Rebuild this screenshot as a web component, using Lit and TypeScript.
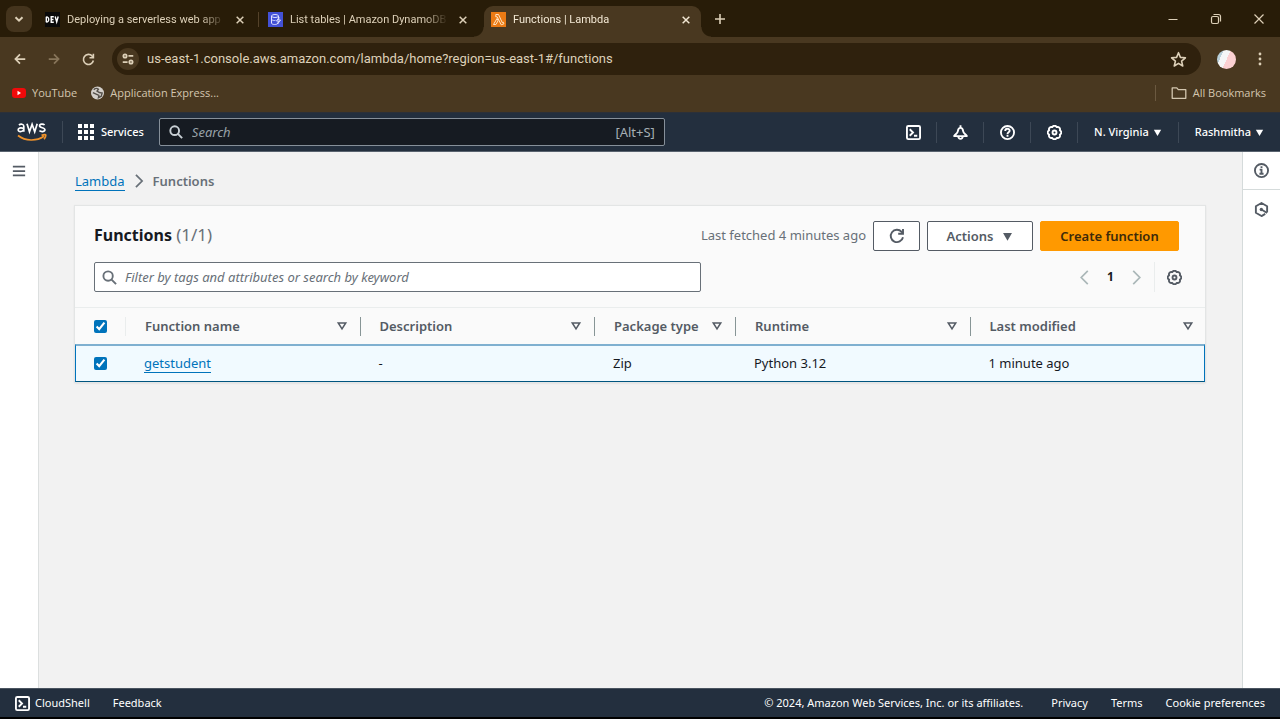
import { LitElement, html, css, svg } from "lit";
import { customElement, property } from "lit/decorators.js";
import { classMap } from "lit/directives/class-map.js";

const base = css`
  * { box-sizing: border-box; }
  button, input { font: inherit; color: inherit; margin: 0; padding: 0; border: 0; background: none; }
  button { display: flex; align-items: center; justify-content: center; }
  a { color: inherit; text-decoration: none; }
  svg { display: block; flex: none; }
  input { outline: none; min-width: 0; }
`;

const icon = (body: unknown, size = 16, width = 2) => html`
  <svg width=${size} height=${size} viewBox="0 0 16 16" fill="none" stroke="currentColor"
    stroke-width=${width} aria-hidden="true">${body}</svg>`;

const shapes = {
  close: svg`<path d="M4.200 4.200l7.600 7.600M11.800 4.200l-7.600 7.600"/>`,
  chevron: svg`<path d="M4.500 6.200L8 9.700l3.500-3.500"/>`,
  plus: svg`<path d="M8 3v10M3 8h10"/>`,
  back: svg`<path d="M14 8H3M8 2.800L2.800 8 8 13.200"/>`,
  forward: svg`<path d="M2 8h11M8 2.800L13.200 8 8 13.200"/>`,
  reload: svg`<path d="M14 9.300A6.200 6.200 0 1 1 12.600 3.800L14 5.200"/><path d="M14 1v4.800H9.200"/>`,
  tune: svg`<path d="M8.500 4.500H14M2 11.500h5.500"/><circle cx="4.600" cy="4.500" r="1.900"/><circle cx="11.400" cy="11.500" r="1.900"/>`,
  star: svg`<path d="M8 1.600l1.800 4.400 4.700.4-3.600 3.100 1.100 4.600L8 11.700l-4 2.400 1.100-4.600L1.500 6.400l4.700-.4z" stroke-linejoin="round"/>`,
  dots: svg`<g fill="currentColor" stroke="none"><circle cx="8" cy="3" r="1.400"/><circle cx="8" cy="8" r="1.400"/><circle cx="8" cy="13" r="1.400"/></g>`,
  folder: svg`<path d="M1.200 13.300V2.900h4.600l1.500 1.800h7.500v8.600z" stroke-linejoin="round"/>`,
  search: svg`<circle cx="6.500" cy="6.500" r="5"/><path d="M10.200 10.200L15 15"/>`,
  shell: svg`<rect x="1" y="1" width="14" height="14" rx="1.500"/><path d="M4 4.500L7.500 8 4 11.500M8.500 11.500H12"/>`,
  bell: svg`<path d="M8 .3v2.500M8 3C5.800 3 5.400 4.800 5.200 6.500 4.900 8.600 2.800 9.700 1.200 11.800h13.600C13.200 9.700 11.100 8.600 10.800 6.500 10.600 4.800 10.200 3 8 3zM5.600 12c.2 3.700 4.600 3.700 4.800 0" stroke-linejoin="round"/>`,
  help: svg`<circle cx="8" cy="8" r="7"/><path d="M5.600 6.300c0-3 4.700-3 4.700-.2 0 1.700-2.300 1.700-2.300 3.400M8 10.500v2"/>`,
  gear: svg`<path d="M13.730 5.630A2.600 2.600 0 0 1 13.730 10.370A2.600 2.600 0 0 1 10.370 13.730A2.600 2.600 0 0 1 5.630 13.730A2.600 2.600 0 0 1 2.270 10.370A2.600 2.600 0 0 1 2.270 5.630A2.600 2.600 0 0 1 5.630 2.270A2.600 2.600 0 0 1 10.370 2.270A2.600 2.600 0 0 1 13.730 5.630z" stroke-linejoin="round"/><circle cx="8" cy="8" r="2.100"/>`,
  info: svg`<circle cx="8" cy="8" r="7"/><path d="M8 3.400v2M6 7h2v4.500M5.800 11.500h4.400"/>`,
  hex: svg`<path d="M14 11V4.500L8 1 2 4.500v7L8 15l4-2.300" stroke-linejoin="round"/><circle cx="7.800" cy="8" r="1.800" fill="currentColor" stroke="none"/><path d="M8 8l6 3.800"/>`,
  menu: svg`<path d="M1 3h14M1 8h14M1 13h14"/>`,
  right: svg`<path d="M4.500 1l7 7-7 7"/>`,
  left: svg`<path d="M11.500 1l-7 7 7 7"/>`,
  caret: svg`<path d="M1.500 3h13L8 14z" fill="currentColor" stroke="none"/>`,
  sort: svg`<path d="M3 4h10L8 11.800z"/>`,
  grid: svg`<g fill="currentColor" stroke="none">${[0, 6, 12].map((x) => [0, 6, 12].map((y) => svg`<rect x=${x} y=${y} width="4" height="4"/>`))}</g>`,
};

const favicons = {
  dev: html`<svg width="15" height="15" viewBox="0 0 15 15" fill="none" stroke="#fff" stroke-width="1.400">
    <rect width="15" height="15" fill="#0a0a0a" stroke="none"/>
    <path d="M1.300 4.800v5.400M1.300 4.900c3.200-.4 3.200 5.600 0 5.200M8.800 4.800H6.200v5.400h2.600M6.200 7.500h2.300M10.200 4.500l1.500 5.400 1.500-5.400"/></svg>`,
  dynamo: html`<svg width="15" height="15" viewBox="0 0 15 15" fill="none" stroke="#dfe1ff" stroke-width="1">
    <rect width="15" height="15" fill="#4351d6" stroke="none"/>
    <ellipse cx="7" cy="4" rx="3.500" ry="1.500"/><path d="M3.500 4v7c0 2 6 2 6.500 0M10.500 4v2M3.500 7.500c1 1 3 1.200 4 .8M11 5.500L8.500 9h2L9.500 12l3-4h-2z"/></svg>`,
  lambda: html`<svg width="15" height="15" viewBox="0 0 15 15" fill="none" stroke="#ffe3c2" stroke-width="1">
    <rect width="15" height="15" fill="#ea7a14" stroke="none"/>
    <path d="M4.800 2.500h2.700l3.700 8 1-.4.700 1.700-2.700 1-4-8H4.800zM6 6.500l-3.500 6h2.400l2.200-3.800z"/></svg>`,
};

@customElement("browser-chrome")
class BrowserChrome extends LitElement {
  static styles = [base, css`
    :host { display: block; background: #493820; color: #ddd0b8; font: 12px/16px "Open Sans", "Noto Sans", sans-serif; }
    .strip { display: flex; background: #281c08; height: 37px; padding: 6px 0 0 6px; align-items: flex-start; }
    .list { width: 26px; height: 26px; border-radius: 8px; background: #44341d; margin-right: 6px; flex: none; }
    .tab { position: relative; display: flex; align-items: center; gap: 7px; flex: 0 1 217px; min-width: 0; height: 31px; padding: 0 7px 4px; font-family: Roboto, sans-serif; font-size: 11px; }
    .tab.active { background: #493820; border-radius: 9px 9px 0 0; color: #f3e8d4; }
    .tab.active::before, .tab.active::after { content: ""; position: absolute; bottom: 0; width: 10px; height: 10px; }
    .tab.active::before { right: 100%; background: radial-gradient(circle at 0 0, transparent 9px, #493820 10px); }
    .tab.active::after { left: 100%; background: radial-gradient(circle at 100% 0, transparent 9px, #493820 10px); }
    .title { flex: 1; min-width: 0; overflow: hidden; white-space: nowrap; mask-image: linear-gradient(90deg, #000 calc(100% - 24px), transparent); }
    .x { width: 16px; height: 16px; }
    .gap { flex: none; width: 6px; height: 26px; display: flex; align-items: center; justify-content: center; }
    .gap.line::before { content: ""; width: 1px; height: 15px; background: #54422a; }
    .new { width: 26px; height: 26px; margin-left: 6px; }
    .window { display: flex; margin-left: auto; }
    .window button { width: 43px; height: 26px; }
    .toolbar { display: flex; align-items: center; height: 43px; padding: 1px 3px 0; }
    .tool { width: 34px; height: 32px; flex: none; }
    .dim { color: #87755a; }
    .omni { flex: 1; display: flex; align-items: center; height: 32px; border-radius: 16px; background: #2f210d; margin: 0 8px 0 7px; padding: 0 14px 0 5px; font-family: Roboto, sans-serif; font-size: 13px; }
    .site { width: 22px; height: 22px; border-radius: 50%; background: #493820; flex: none; margin-right: 8px; }
    .url { flex: 1; }
    .avatar { width: 19px; height: 19px; border-radius: 50%; background: linear-gradient(115deg, #b9d0da 0 25%, #f5f6f7 25% 50%, #fbd0d2 50%); }
    .marks { display: flex; align-items: center; height: 33px; padding: 0 14px 6px 12px; border-bottom: 1px solid #2c3038; font-size: 11px; gap: 14px; color: #d3c6af; }
    .mark { display: flex; align-items: center; gap: 6px; }
    .all { margin-left: auto; padding-left: 15px; border-left: 1px solid #6b5940; }
  `];

  private tabs = [
    { icon: favicons.dev, title: "Deploying a serverless web app", active: false },
    { icon: favicons.dynamo, title: "List tables | Amazon DynamoDB", active: false },
    { icon: favicons.lambda, title: "Functions | Lambda", active: true },
  ];

  render() {
    return html`
      <div class="strip">
        <button class="list" aria-label="Search tabs">${icon(shapes.chevron)}</button>
        ${this.tabs.map((t, i) => html`
          ${i ? html`<span class=${classMap({ gap: true, line: !t.active })}></span>` : ""}
          <div class=${classMap({ tab: true, active: t.active })}>
            ${t.icon}<span class="title">${t.title}</span>
            <button class="x" aria-label="Close tab">${icon(shapes.close, 14, 1.7)}</button>
          </div>`)}
        <button class="new" aria-label="New tab">${icon(shapes.plus, 16, 1.6)}</button>
        <div class="window">
          <button aria-label="Minimize">${icon(svg`<path d="M3.500 8.500h9"/>`, 16, 1)}</button>
          <button aria-label="Restore">${icon(svg`<rect x="3.500" y="5.500" width="7" height="7" rx="1.500"/><path d="M5.500 3.500h5a2 2 0 0 1 2 2v5"/>`, 16, 1.2)}</button>
          <button aria-label="Close">${icon(svg`<path d="M3.500 3.500l9 9M12.500 3.500l-9 9"/>`, 16, 1.2)}</button>
        </div>
      </div>
      <div class="toolbar">
        <button class="tool" aria-label="Back">${icon(shapes.back, 14)}</button>
        <button class="tool dim" aria-label="Forward">${icon(shapes.forward, 14)}</button>
        <button class="tool" aria-label="Reload">${icon(shapes.reload, 13)}</button>
        <div class="omni">
          <button class="site" aria-label="Site information">${icon(shapes.tune, 14)}</button>
          <input class="url" aria-label="Address" value="us-east-1.console.aws.amazon.com/lambda/home?region=us-east-1#/functions">
          <button aria-label="Bookmark">${icon(shapes.star, 17, 1.5)}</button>
        </div>
        <button class="tool" aria-label="Profile"><span class="avatar"></span></button>
        <button class="tool" aria-label="Menu">${icon(shapes.dots, 16)}</button>
      </div>
      <nav class="marks">
        <a class="mark" href="#"><svg width="14" height="12" viewBox="0 0 14 12"><rect y="1" width="14" height="10" rx="3" fill="#f00a0a"/><path d="M5.500 3.800v4.400L9 6z" fill="#fff"/></svg>YouTube</a>
        <a class="mark" href="#"><svg width="13" height="14" viewBox="0 0 14 14"><circle cx="7" cy="7" r="7" fill="#d4d0cb"/><path d="M3 3.500c2-2 4-1.500 5-.5L6.500 5l2.500 1.500 3 .5-1 3.500-3 1.500.5-2.500L5 8 2 6.500" fill="none" stroke="#55504a" stroke-width="1.500"/></svg>Application Express...</a>
        <a class="mark all" href="#">${icon(shapes.folder, 16, 1.3)}All Bookmarks</a>
      </nav>`;
  }
}

@customElement("console-header")
class ConsoleHeader extends LitElement {
  static styles = [base, css`
    :host { display: flex; align-items: center; height: 39px; padding-left: 17px; background: #232f3e; border-bottom: 1px solid #59636f; color: #fff; font: 500 11px/16px "Noto Sans", sans-serif; }
    .services { gap: 7px; height: 22px; margin-left: 15px; padding-left: 15px; border-left: 1px solid #3d4856; }
    .search { flex: 0 1 506px; display: flex; align-items: center; height: 28px; margin-left: 15px; padding: 0 9px; gap: 9px; border: 1px solid #86909a; border-radius: 2px; background: #161b22; font-size: 13px; font-weight: 400; color: #c9d0d5; }
    .search input { flex: 1; }
    .search input::placeholder { color: #98a2a8; font-style: italic; opacity: 1; }
    .hint { color: #a5afb5; }
    .right { display: flex; margin-left: auto; }
    .cell { width: 47px; height: 21px; border-right: 1px solid #3d4856; }
    .menu { height: 21px; padding: 0 16px; gap: 4px; }
    .menu.region { border-right: 1px solid #3d4856; }
  `];

  render() {
    const cells: [string, unknown][] = [["CloudShell", shapes.shell], ["Notifications", shapes.bell], ["Help", shapes.help], ["Settings", shapes.gear]];
    return html`
      <a href="#" aria-label="AWS"><svg width="30" height="20" viewBox="0 0 30 20" fill="none" stroke="#fff" stroke-width="1.700">
        <path d="M1.900 3c1.700-1.200 4.900-1.200 4.900 1.200v5.600M6.800 6.300C3.200 5.500 1.200 6 1.200 7.800c0 2.500 4 2.300 5.600-.2M10 1.800l2.500 8 2.600-7.500 2.600 7.500 2.500-8M27.600 3c-1.300-1.200-5-1.300-5 .8 0 2.600 5.300 1.300 5.300 4 0 2.100-3.800 2.300-5.500.9"/>
        <path d="M1 13.500c7.500 5.800 18.500 5.900 26 .8M24.500 13.200c3-.8 4.500-.6 4.200 0 .2 1-.3 2.500-1.600 4" stroke="#f0932b"/></svg></a>
      <button class="services">${icon(shapes.grid, 16)}Services</button>
      <label class="search">
        ${icon(shapes.search, 14, 2.2)}
        <input type="text" placeholder="Search" aria-label="Search"><span class="hint">[Alt+S]</span>
      </label>
      <div class="right">
        ${cells.map(([n, s]) => html`<button class="cell" aria-label=${n}>${icon(s, 15)}</button>`)}
        <button class="menu region">N. Virginia ${icon(shapes.caret, 9)}</button>
        <button class="menu">Rashmitha ${icon(shapes.caret, 9)}</button>
      </div>`;
  }
}

@customElement("functions-panel")
class FunctionsPanel extends LitElement {
  @property({ attribute: false }) rows = [
    { name: "getstudent", description: "-", pkg: "Zip", runtime: "Python 3.12", modified: "1 minute ago" },
  ];

  static styles = [base, css`
    :host { display: block; background: #fafafa; box-shadow: 0 0 1px 1px #e3e5e5, 0 1px 2px #ccc; color: #16191f; font: 13px/20px "Noto Sans", sans-serif; }
    .row { display: flex; align-items: center; }
    .top { padding: 15px 26px 0 19px; gap: 7px; }
    h1 { font-size: 16px; line-height: 24px; font-weight: 700; margin: 0 auto 0 0; padding-bottom: 2px; }
    h1 span { font-weight: 400; font-size: 17px; color: #687078; }
    .fetched { color: #687078; padding-bottom: 2px; }
    .btn { height: 30px; border: 1px solid #545b64; border-radius: 2px; background: #fff; color: #545b64; font-weight: 600; gap: 9px; }
    .refresh { width: 47px; }
    .actions { width: 106px; }
    .primary { background: #ff9900; border-color: #ff9900; color: #3d2a0a; width: 139px; }
    .tools { padding: 11px 19px 15px; }
    .filter { flex: 0 1 607px; display: flex; align-items: center; gap: 8px; height: 30px; padding: 0 7px; border: 1px solid #687078; border-radius: 2px; background: #fff; color: #687078; }
    .filter input { flex: 1; }
    .filter input::placeholder { color: #687078; font-style: italic; opacity: 1; }
    .pager { margin-left: auto; gap: 13px; color: #aab7b8; }
    .page { font-weight: 700; font-size: 12px; color: #16191f; width: 11px; }
    .gear { height: 30px; padding: 0 4px 0 12px; border-left: 1px solid #eaeded; color: #545b64; margin-left: -3px; }
    table { width: 100%; table-layout: fixed; border-collapse: separate; border-spacing: 0; }
    .check { width: 51px; }
    .narrow { width: 141px; }
    th, td { padding: 0 0 0 19px; text-align: left; vertical-align: middle; white-space: nowrap; }
    th { height: 37px; border-top: 1px solid #eaeded; color: #545b64; font-weight: 600; }
    .head { display: flex; align-items: center; justify-content: space-between; height: 19px; padding-right: 12px; border-right: 1px solid #879596; }
    .head.faint { border-color: #eaeded; }
    .head.last { border-color: transparent; padding-right: 10px; }
    td { height: 38px; padding-left: 18px; padding-bottom: 1px; background: #f1faff; border-top: 2px solid #7fb0d0; border-bottom: 1px solid #00557f; }
    td:first-child { border-left: 1px solid #0073bb; }
    td:last-child { border-right: 1px solid #0073bb; }
    .box { display: block; width: 13px; height: 13px; accent-color: #0073bb; }
    .link { color: #0073bb; border-bottom: 1px solid #0073bb; }
  `];

  render() {
    const heads = ["Function name", "Description", "Package type", "Runtime", "Last modified"];
    return html`
      <div class="row top">
        <h1>Functions <span>(1/1)</span></h1>
        <span class="fetched">Last fetched 4 minutes ago</span>
        <button class="btn refresh" aria-label="Refresh">${icon(shapes.reload, 16, 1.9)}</button>
        <button class="btn actions">Actions ${icon(shapes.caret, 11)}</button>
        <button class="btn primary">Create function</button>
      </div>
      <div class="row tools">
        <label class="filter">${icon(shapes.search, 15)}
          <input type="text" aria-label="Filter functions" placeholder="Filter by tags and attributes or search by keyword"></label>
        <div class="row pager">
          <button aria-label="Previous page">${icon(shapes.left, 15, 1.8)}</button>
          <button class="page">1</button>
          <button aria-label="Next page">${icon(shapes.right, 15, 1.8)}</button>
          <button class="gear" aria-label="Preferences">${icon(shapes.gear, 15)}</button>
        </div>
      </div>
      <table>
        <colgroup><col class="check"><col><col><col class="narrow"><col><col></colgroup>
        <thead><tr>
          <th><div class="head faint"><input class="box" type="checkbox" checked aria-label="Select all"></div></th>
          ${heads.map((h, i) => html`<th><div class=${classMap({ head: true, last: i === heads.length - 1 })}>${h}${icon(shapes.sort, 12, 2)}</div></th>`)}
        </tr></thead>
        <tbody>${this.rows.map((r) => html`<tr>
          <td><input class="box" type="checkbox" checked aria-label=${"Select " + r.name}></td>
          <td><a class="link" href="#">${r.name}</a></td>
          <td>${r.description}</td><td>${r.pkg}</td><td>${r.runtime}</td><td>${r.modified}</td>
        </tr>`)}</tbody>
      </table>`;
  }
}

@customElement("app-root")
class AppRoot extends LitElement {
  static styles = [base, css`
    :host { display: flex; flex-direction: column; height: 100vh; overflow: hidden; font: 13px/20px "Noto Sans", sans-serif; background: #f2f2f2; }
    .body { flex: 1; display: flex; min-height: 0; }
    .rail { flex: none; background: #fff; color: #545b64; }
    .rail button { width: 37px; height: 37px; }
    .rail.end { border-left: 1px solid #d5dbdb; }
    .rail.end button + button { height: 39px; border-top: 1px solid #d5dbdb; }
    .rail.start { padding-right: 1px; border-right: 1px solid #dcdfdf; }
    main { flex: 1; min-width: 0; padding: 19px 37px 19px 36px; background: #f2f2f2; }
    .crumbs { display: flex; align-items: center; gap: 7px; margin-bottom: 15px; color: #687078; font-weight: 600; }
    .crumbs a { color: #0073bb; font-weight: 400; line-height: 18px; border-bottom: 1px solid #0073bb; }
    footer { display: flex; align-items: center; height: 31px; padding: 0 15px; border-top: 1px solid #4a5460; border-bottom: 2px solid #000; background: #232f3e; color: #fff; font: 11px/16px "Noto Sans", sans-serif; gap: 23px; }
    footer button { gap: 5px; }
    .copy { margin-left: auto; padding-right: 5px; }
  `];

  render() {
    return html`
      <browser-chrome></browser-chrome>
      <console-header></console-header>
      <div class="body">
        <div class="rail start"><button aria-label="Open navigation">${icon(shapes.menu, 14)}</button></div>
        <main>
          <nav class="crumbs"><a href="#">Lambda</a>${icon(shapes.right, 14)}<span>Functions</span></nav>
          <functions-panel></functions-panel>
        </main>
        <div class="rail end">
          <button aria-label="Info">${icon(shapes.info, 15)}</button>
          <button aria-label="Tutorials">${icon(shapes.hex, 15)}</button>
        </div>
      </div>
      <footer>
        <button>${icon(shapes.shell, 15)}CloudShell</button><a href="#">Feedback</a>
        <span class="copy">© 2024, Amazon Web Services, Inc. or its affiliates.</span>
        <a href="#">Privacy</a><a href="#">Terms</a><a href="#">Cookie preferences</a>
      </footer>`;
  }
}
